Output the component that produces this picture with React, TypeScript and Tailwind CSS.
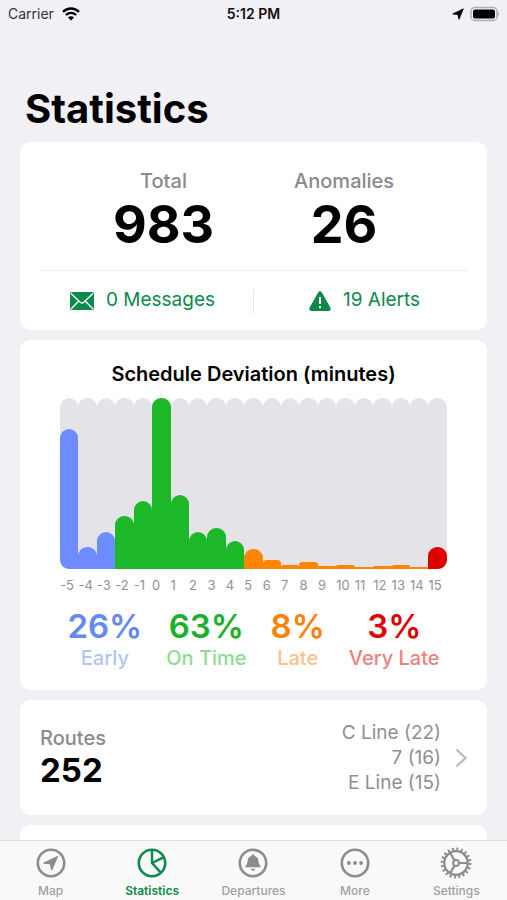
import React from "react";

const bars = [
  { label: "-5", value: 140, color: "bg-[#6c8cff]" },
  { label: "-4", value: 22, color: "bg-[#6c8cff]" },
  { label: "-3", value: 37, color: "bg-[#6c8cff]" },
  { label: "-2", value: 53, color: "bg-[#1db82a]" },
  { label: "-1", value: 68, color: "bg-[#1db82a]" },
  { label: "0", value: 171, color: "bg-[#1db82a]" },
  { label: "1", value: 74, color: "bg-[#1db82a]" },
  { label: "2", value: 37, color: "bg-[#1db82a]" },
  { label: "3", value: 41, color: "bg-[#1db82a]" },
  { label: "4", value: 28, color: "bg-[#1db82a]" },
  { label: "5", value: 20, color: "bg-[#ff8400]" },
  { label: "6", value: 9, color: "bg-[#ff8400]" },
  { label: "7", value: 4, color: "bg-[#ff8400]" },
  { label: "8", value: 7, color: "bg-[#ff8400]" },
  { label: "9", value: 3, color: "bg-[#ff8400]" },
  { label: "10", value: 4, color: "bg-[#ff8400]" },
  { label: "11", value: 2, color: "bg-[#ff8400]" },
  { label: "12", value: 3, color: "bg-[#ff8400]" },
  { label: "13", value: 4, color: "bg-[#ff8400]" },
  { label: "14", value: 2, color: "bg-[#ff8400]" },
  { label: "15", value: 22, color: "bg-[#e00000]" },
];

const maxValue = Math.max(...bars.map((bar) => bar.value));

// Short bars get a flatter top
const topRadius = (value: number) => {
  const radius = Math.min(9, Math.floor(value / 2));
  return `${radius}px ${radius}px 0 0`;
};

const summary = [
  { percent: "26%", label: "Early", color: "text-[#6488f5]", labelColor: "text-[#b3c4fb]" },
  { percent: "63%", label: "On Time", color: "text-[#1bb02a]", labelColor: "text-[#8edc95]" },
  { percent: "8%", label: "Late", color: "text-[#fb8208]", labelColor: "text-[#fdc088]" },
  { percent: "3%", label: "Very Late", color: "text-[#dc0404]", labelColor: "text-[#ee8080]" },
];

const topRoutes = ["C Line (22)", "7 (16)", "E Line (15)"];

const StatusBar = () => (
  <div className="grid h-7 shrink-0 grid-cols-3 items-center px-2 text-sm">
    <div className="flex items-center gap-2 text-[#333]">
      <span>Carrier</span>
      <svg className="h-3.5 w-[18px]" viewBox="0 0 18 14" fill="none" stroke="#000" strokeWidth="2.3" aria-hidden="true">
        <path d="M1 4.8C5.6.4 12.4.4 17 4.8" />
        <path d="M3.9 8C7 5.2 11 5.2 14.1 8" />
        <path d="M9 13.6 6 10.5c1.8-1.6 4.2-1.6 6 0z" fill="#000" stroke="none" />
      </svg>
    </div>
    <div className="text-center font-semibold text-[#111]">5:12 PM</div>
    <div className="flex items-center justify-end gap-1.5">
      <svg className="size-3" viewBox="0 0 12 12" aria-hidden="true">
        <path d="M11.3.8 7 11.3 5.8 6.4.8 6z" fill="#000" stroke="#000" strokeWidth="0.8" strokeLinejoin="round" />
      </svg>
      <svg className="h-4 w-[29px]" viewBox="0 0 29 16" aria-hidden="true">
        <rect x="1" y="1.5" width="26" height="13" rx="4" fill="#f1f0f5" stroke="#b0b0b2" strokeWidth="1.5" />
        <rect x="3" y="3.5" width="22" height="9" rx="2" fill="#000" />
        <path d="M27.5 5.5c2 1 2 4 0 5z" fill="#b0b0b2" />
      </svg>
    </div>
  </div>
);

const MapIcon = () => (
  <svg className="size-8" viewBox="0 0 32 32" aria-hidden="true">
    <circle cx="16" cy="16" r="13.2" fill="none" stroke="currentColor" strokeWidth="2.6" />
    <path
      d="M22.7 9.3 16.7 23.2 15.3 16.9 8.6 16.2z"
      fill="currentColor"
      stroke="currentColor"
      strokeLinejoin="round"
    />
  </svg>
);

const StatisticsIcon = () => (
  <svg className="size-8" viewBox="0 0 32 32" fill="none" stroke="currentColor" strokeWidth="2.6" aria-hidden="true">
    <circle cx="16" cy="16" r="13.2" />
    <path d="M16 3v13l9 9.9M16 16l11.5-5.7" strokeWidth="2.4" />
  </svg>
);

const DeparturesIcon = () => (
  <svg className="size-8" viewBox="0 0 32 32" aria-hidden="true">
    <circle cx="16" cy="16" r="13.2" fill="none" stroke="currentColor" strokeWidth="2.6" />
    <path
      d="M16 7.6c.9 0 1.5.5 1.6 1.3 2.5.7 3.7 2.5 3.8 4.9.1 3.1 1 3.9 2 5 .6.7.2 1.5-.8 1.5H9.400c-1 0-1.400-.8-.8-1.500 1-1.100 1.900-1.900 2-5 .1-2.400 1.300-4.200 3.800-4.900.1-.8.7-1.300 1.600-1.300zM13.800 21.700h4.400c-.2 1.300-1 2-2.200 2s-2-.7-2.200-2z"
      fill="currentColor"
    />
  </svg>
);

const MoreIcon = () => (
  <svg className="size-8" viewBox="0 0 32 32" fill="currentColor" aria-hidden="true">
    <circle cx="16" cy="16" r="13.2" fill="none" stroke="currentColor" strokeWidth="2.6" />
    <circle cx="9.9" cy="16" r="1.9" />
    <circle cx="16" cy="16" r="1.9" />
    <circle cx="22.1" cy="16" r="1.9" />
  </svg>
);

const SettingsIcon = () => (
  <svg className="size-8" viewBox="0 0 32 32" fill="none" stroke="currentColor" aria-hidden="true">
    <circle cx="16" cy="16" r="14" strokeWidth="3" strokeDasharray="1.9 2.498" />
    <circle cx="16" cy="16" r="11.8" strokeWidth="2.3" />
    <circle cx="16" cy="16" r="2.9" strokeWidth="2" />
    <path d="M19 16h8.5M14.5 13.4 10.2 6M14.5 18.6 10.2 26" strokeWidth="2.2" />
  </svg>
);

const tabs = [
  { name: "Map", Icon: MapIcon },
  { name: "Statistics", Icon: StatisticsIcon },
  { name: "Departures", Icon: DeparturesIcon },
  { name: "More", Icon: MoreIcon },
  { name: "Settings", Icon: SettingsIcon },
];

const TotalsCard = () => (
  <section className="rounded-[10px] bg-white px-5 pt-[25px]">
    <div className="flex justify-center gap-20 pb-[15px] text-center">
      <div>
        <h2 className="text-xl leading-7 font-medium text-[#8a8a8a]">Total</h2>
        <p className="text-[52px] leading-[60px] font-bold">983</p>
      </div>
      <div>
        <h2 className="text-xl leading-7 font-medium text-[#8a8a8a]">Anomalies</h2>
        <p className="text-[52px] leading-[60px] font-bold">26</p>
      </div>
    </div>
    <div className="flex h-[60px] items-center border-t border-[#ececee] text-[19px] text-[#0b8a4b]">
      <button className="flex flex-1 items-center justify-center gap-3 pr-2">
        <svg className="h-[18px] w-6" viewBox="0 0 24 18" aria-hidden="true">
          <rect width="24" height="18" rx="2" fill="currentColor" />
          <path
            d="M1 1.5 10.3 10.3q1.7 1.5 3.4 0L23 1.5M1 17l7.8-8M23 17l-7.8-8"
            fill="none"
            stroke="#fff"
            strokeWidth="1.3"
          />
        </svg>
        0 Messages
      </button>
      <div className="h-6 w-px bg-[#e8e8ea]" />
      <button className="flex flex-1 items-center justify-center gap-3 pl-2">
        <svg className="h-5 w-[22px]" viewBox="0 0 22 20" aria-hidden="true">
          <path d="M9.4.9q1.6-1.4 3.2 0L21.6 17q.7 2.5-1.6 3H2q-2.3-.5-1.6-3z" fill="currentColor" />
          <path d="M11 6v7M11 15v2.2" stroke="#fff" strokeWidth="2" />
        </svg>
        19 Alerts
      </button>
    </div>
  </section>
);

const DeviationCard = () => (
  <section className="rounded-[10px] bg-white px-10 py-5">
    <h2 className="text-center text-xl leading-7 font-semibold">Schedule Deviation (minutes)</h2>
    <div className="mt-2.5 flex h-[171px] overflow-hidden rounded-[9px]">
      {bars.map((bar) => (
        <div key={bar.label} className="flex flex-1 items-end rounded-t-[9px] bg-[#e4e3e8]">
          <div
            className={`w-full ${bar.color}`}
            style={{ height: `${(bar.value / maxValue) * 100}%`, borderRadius: topRadius(bar.value) }}
          />
        </div>
      ))}
    </div>
    <div className="mt-[7px] flex text-[13px] leading-[18px] text-[#929292]">
      {bars.map((bar) => (
        <span key={bar.label} className="w-0 flex-1 whitespace-nowrap">
          {bar.label}
        </span>
      ))}
    </div>
    <div className="mt-3 flex justify-center gap-6 text-center">
      {summary.map((item) => (
        <div key={item.label}>
          <p className={`text-[33px] leading-10 font-semibold ${item.color}`}>{item.percent}</p>
          <p className={`text-xl leading-6 font-medium ${item.labelColor}`}>{item.label}</p>
        </div>
      ))}
    </div>
  </section>
);

const RoutesCard = () => (
  <button className="flex items-center rounded-[10px] bg-white p-5 text-left">
    <div className="flex-1 pb-1">
      <h2 className="text-xl leading-7 font-medium text-[#8a8a8a]">Routes</h2>
      <p className="text-[33px] leading-9 font-bold">252</p>
    </div>
    <ul className="text-right text-[19px] leading-[25px] text-[#8f8f8f]">
      {topRoutes.map((route) => (
        <li key={route}>{route}</li>
      ))}
    </ul>
    <svg
      className="ml-3.5 h-5 w-3"
      viewBox="0 0 12 20"
      fill="none"
      stroke="#bcbcbc"
      strokeWidth="2.4"
      aria-hidden="true"
    >
      <path d="M1.5 1.5 10.5 10l-9 8.5" />
    </svg>
  </button>
);

const TabBar = () => (
  <nav className="grid shrink-0 grid-cols-5 border-t border-[#dcdcde] bg-[#f9f9f9] pt-1.5 pb-px">
    {tabs.map(({ name, Icon }) => (
      <a
        key={name}
        href={`#${name.toLowerCase()}`}
        className={`flex flex-col items-center ${
          name === "Statistics" ? "font-semibold text-[#0b8a4b]" : "font-medium text-[#8c8c8c]"
        }`}
      >
        <Icon />
        <span className={`mt-1 text-xs ${name === "Statistics" ? "" : "text-[#a0a0a0]"}`}>{name}</span>
      </a>
    ))}
  </nav>
);

export default function App() {
  return (
    <div className="flex h-screen flex-col bg-[#f1f0f5] font-[Inter,sans-serif] text-black">
      <StatusBar />
      <main className="flex min-h-0 flex-1 flex-col overflow-y-auto px-5 [scrollbar-width:none]">
        <h1 className="mt-14 px-[5px] text-[40px] leading-[50px] font-bold">Statistics</h1>
        <div className="mt-2 flex flex-col gap-2.5">
          <TotalsCard />
          <DeviationCard />
          <RoutesCard />
          <section className="h-28 rounded-[10px] bg-white" />
        </div>
      </main>
      <TabBar />
    </div>
  );
}
